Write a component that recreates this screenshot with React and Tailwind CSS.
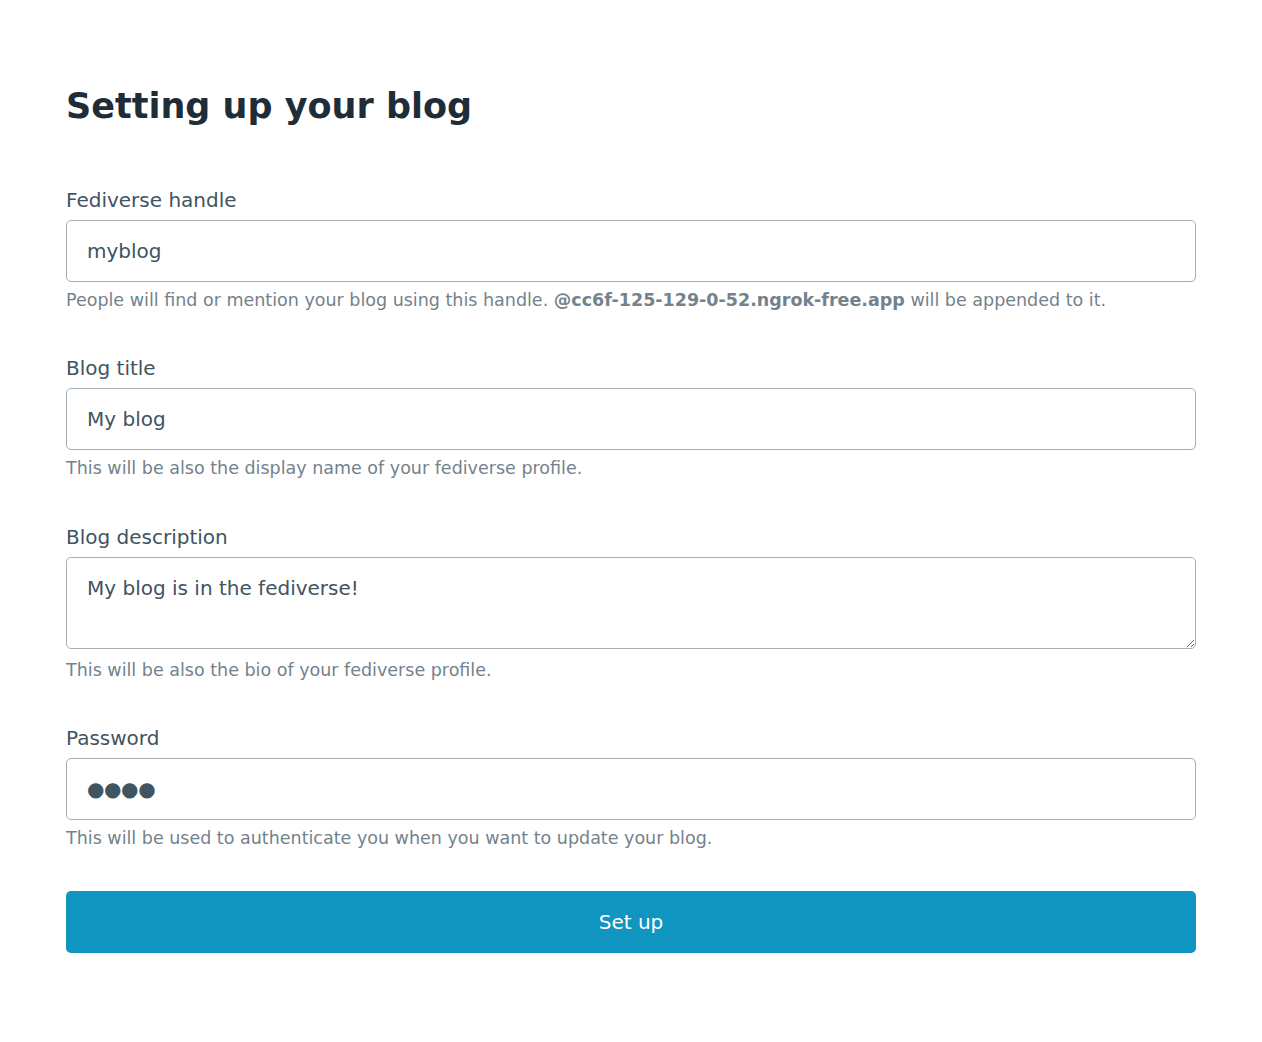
function Field({ label, help, className = "mb-[40px]", helpClass = "mt-[5px]", children }) {
  return (
    <div className={className}>
      <label className="block text-[20px] leading-[30px] text-[#415462] mb-[5px]">{label}</label>
      {children}
      <p className={`${helpClass} text-[17.5px] leading-[26px] text-[#73828c]`}>{help}</p>
    </div>
  );
}

const inputCls =
  "block w-full h-[62px] rounded-[5px] border border-[#a2afb9] bg-white px-[20px] text-[20px] text-[#415462] outline-none";

export default function App() {
  return (
    <div className="min-h-screen bg-white px-[66px] pt-[86px] font-['DejaVu_Sans',sans-serif]">
      <h1 className="text-[35px] leading-[40px] font-bold text-[#1f2d38] mb-[59px]">Setting up your blog</h1>
      <form onSubmit={(e) => e.preventDefault()}>
        <Field
          label="Fediverse handle"
          help={
            <>
              People will find or mention your blog using this handle.{" "}
              <strong className="font-bold">@cc6f-125-129-0-52.ngrok-free.app</strong> will be appended to it.
            </>
          }
        >
          <input className={inputCls} defaultValue="myblog" />
        </Field>
        <Field
          label="Blog title"
          help="This will be also the display name of your fediverse profile."
          className="mb-[41px]"
        >
          <input className={inputCls} defaultValue="My blog" />
        </Field>
        <Field
          label="Blog description"
          help="This will be also the bio of your fediverse profile."
          className="mb-[40px]"
          helpClass="mt-[8px]"
        >
          <textarea
            className="block w-full h-[92px] rounded-[5px] border border-[#a2afb9] bg-white px-[20px] pt-[15px] pb-[13px] text-[20px] leading-[30px] text-[#415462] outline-none"
            defaultValue="My blog is in the fediverse!"
          />
        </Field>
        <Field
          label="Password"
          help="This will be used to authenticate you when you want to update your blog."
          className="mb-[40px]"
        >
          <input
            aria-label="Password"
            className={`${inputCls} tracking-[-0.4px]`}
            defaultValue="●●●●"
          />
        </Field>
        <button
          type="submit"
          className="block w-full h-[62px] rounded-[5px] bg-[#1095c1] text-[20px] text-white"
        >
          Set up
        </button>
      </form>
    </div>
  );
}
